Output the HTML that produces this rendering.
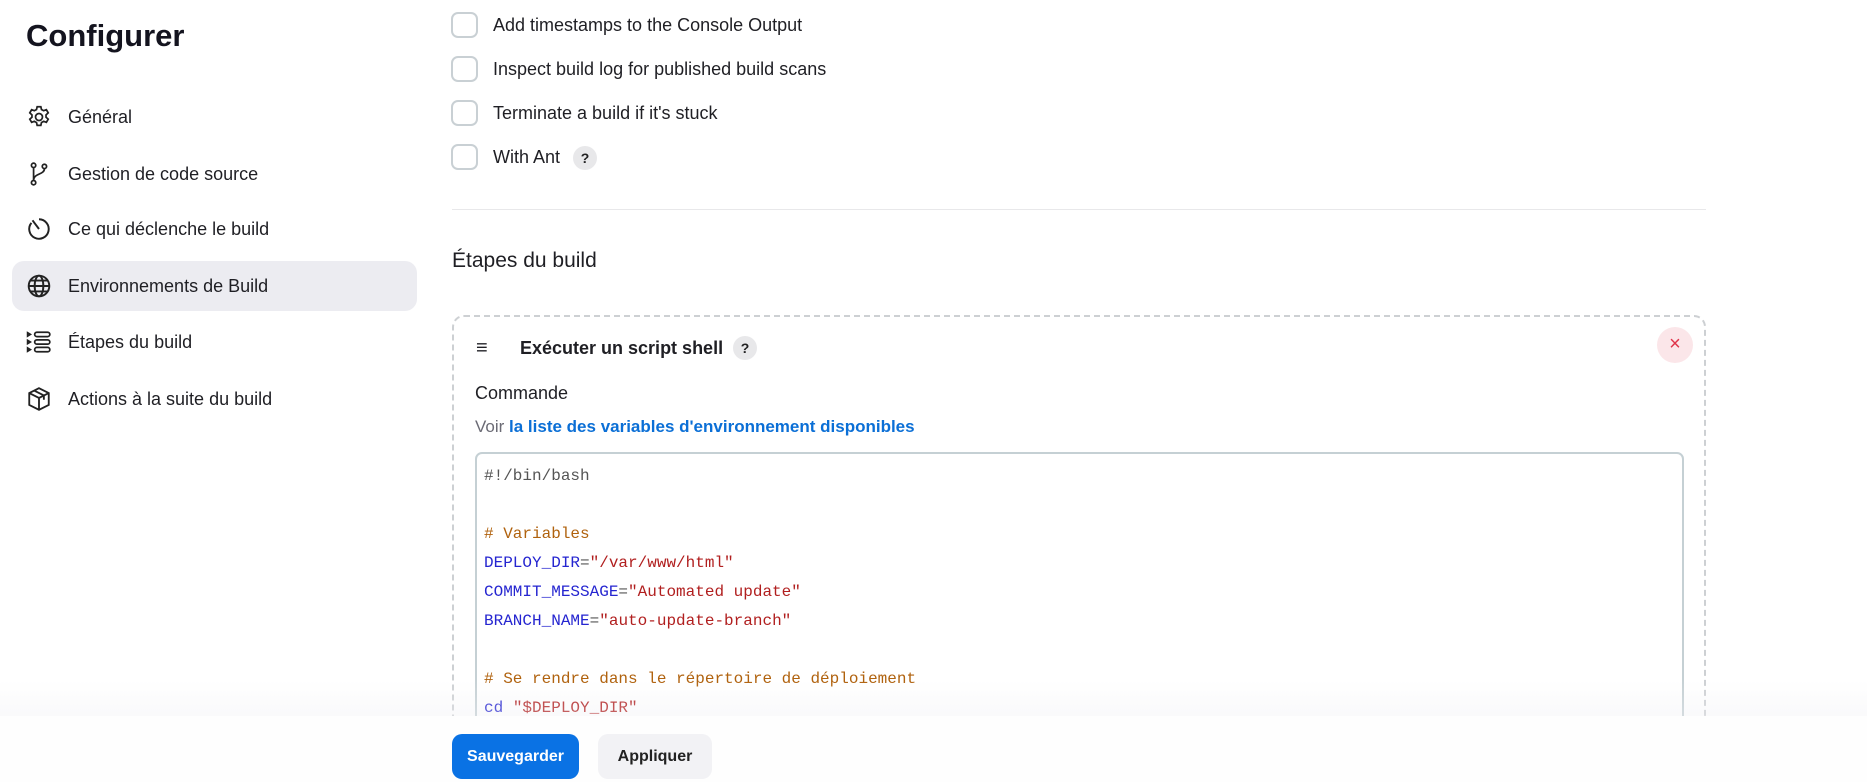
<!DOCTYPE html>
<html style="width:1867px;height:782px;overflow:hidden"><head><meta charset="utf-8"><style>
*{box-sizing:border-box;margin:0;padding:0}
body{width:1867px;height:782px;overflow:hidden;background:#fff;font-family:"Liberation Sans",sans-serif;color:#1f1f24;position:relative}
.abs{position:absolute}
h1{position:absolute;left:26px;top:18px;font-size:31px;font-weight:700;color:#14141f}
.nav{position:absolute;left:26px;height:30px;display:flex;align-items:center;font-size:18px}
.nav svg{width:26px;height:26px;margin-right:16px}
.active{position:absolute;left:12px;top:261px;width:405px;height:50px;background:#ececf1;border-radius:12px}
.cb{position:absolute;left:451px;width:27px;height:26px;border:2px solid #c9d0d4;border-radius:7px;background:#fff}
.cbl{position:absolute;left:493px;font-size:18px;line-height:26px}
.q{display:inline-flex;align-items:center;justify-content:center;width:24px;height:24px;border-radius:50%;background:#e8e8ea;font-size:14px;font-weight:700;color:#222}
.code{position:absolute;left:484px;top:462px;font-family:"Liberation Mono",monospace;font-size:16px;line-height:29px;white-space:pre;color:#555}
.v{color:#2525d0}.s{color:#b11f1f}.c{color:#b0620e}
</style></head><body>
<h1>Configurer</h1>
<div class="active"></div>
<div class="nav" style="top:102px"><svg viewBox="0 0 24 24" fill="none" stroke="#222" stroke-width="1.6"><circle cx="12" cy="12" r="3.2"/><path d="M10.3 2.5h3.4l.6 2.6 2 1.1 2.5-.9 1.7 2.9-2 1.8v2.2l2 1.8-1.7 2.9-2.5-.9-2 1.1-.6 2.6h-3.4l-.6-2.6-2-1.1-2.5.9-1.700-2.9 2-1.8v-2.2l-2-1.8 1.7-2.9 2.5.9 2-1.1z"/></svg>Général</div>
<div class="nav" style="top:159px"><svg viewBox="0 0 24 24" fill="none" stroke="#222" stroke-width="1.6"><circle cx="7" cy="4" r="2"/><circle cx="7" cy="20" r="2"/><circle cx="17" cy="5" r="2"/><path d="M7 6v12M17 7c0 6-10 4-10 11"/></svg>Gestion de code source</div>
<div class="nav" style="top:214px"><svg viewBox="0 0 24 24" fill="none" stroke="#222" stroke-width="1.8"><path d="M12 3a9 9 0 1 1-7 3.3"/><path d="M6 4l6 8"/></svg>Ce qui déclenche le build</div>
<div class="nav" style="top:271px"><svg viewBox="0 0 24 24" fill="none" stroke="#222" stroke-width="1.8"><circle cx="12" cy="12" r="9.5"/><ellipse cx="12" cy="12" rx="4" ry="9.5"/><path d="M2.5 12h19M4 7h16M4 17h16"/></svg>Environnements de Build</div>
<div class="nav" style="top:327px"><svg viewBox="0 0 24 24" fill="none" stroke="#222" stroke-width="1.6"><path d="M1.5 3.5l2.5 1.5-2.5 1.5zM1.5 10.5l2.5 1.5-2.5 1.5zM1.5 17.5l2.5 1.5-2.5 1.5z"/><rect x="8" y="3" width="14" height="4" rx="2"/><rect x="8" y="10" width="14" height="4" rx="2"/><rect x="8" y="17" width="14" height="4" rx="2"/></svg>Étapes du build</div>
<div class="nav" style="top:384px"><svg viewBox="0 0 24 24" fill="none" stroke="#222" stroke-width="1.7"><path d="M12 2l9 4.5v11L12 22l-9-4.5v-11z"/><path d="M3 6.5l9 4.5 9-4.5M12 11v11M7.5 4.2l9 4.5v4"/></svg>Actions à la suite du build</div>

<div class="cb" style="top:12px"></div><div class="cbl" style="top:12px">Add timestamps to the Console Output</div>
<div class="cb" style="top:56px"></div><div class="cbl" style="top:56px">Inspect build log for published build scans</div>
<div class="cb" style="top:100px"></div><div class="cbl" style="top:100px">Terminate a build if it's stuck</div>
<div class="cb" style="top:144px"></div><div class="cbl" style="top:144px">With Ant <span class="q" style="margin-left:8px;vertical-align:middle">?</span></div>
<div class="abs" style="left:452px;top:209px;width:1254px;height:1px;background:#e8e8ea"></div>
<div class="abs" style="left:452px;top:249px;font-size:21px">Étapes du build</div>
<div class="abs" style="left:452px;top:315px;width:1254px;height:490px;border:2px dashed #cdd0d3;border-radius:12px"></div>
<div class="abs" style="left:476px;top:337px;font-size:20px">≡</div>
<div class="abs" style="left:520px;top:336px;font-size:18px;font-weight:700;display:flex;align-items:center">Exécuter un script shell <span class="q" style="margin-left:10px">?</span></div>
<div class="abs" style="left:1657px;top:327px;width:36px;height:36px;border-radius:50%;background:#fbe6e9;color:#e0344a;font-size:20px;text-align:center;line-height:35px">×</div>
<div class="abs" style="left:475px;top:383px;font-size:18px">Commande</div>
<div class="abs" style="left:475px;top:417px;font-size:17px;color:#6b6b75">Voir <span style="color:#0b6fd6;font-weight:600">la liste des variables d'environnement disponibles</span></div>
<div class="abs" style="left:475px;top:452px;width:1209px;height:350px;border:2px solid #c5d0d4;border-radius:7px"></div>
<div class="code">#!/bin/bash

<span class="c"># Variables</span>
<span class="v">DEPLOY_DIR</span>=<span class="s">"/var/www/html"</span>
<span class="v">COMMIT_MESSAGE</span>=<span class="s">"Automated update"</span>
<span class="v">BRANCH_NAME</span>=<span class="s">"auto-update-branch"</span>

<span class="c"># Se rendre dans le répertoire de déploiement</span>
<span class="v">cd</span> <span class="s">"$DEPLOY_DIR"</span></div>
<div class="abs" style="left:0;top:680px;width:1867px;height:36px;background:linear-gradient(rgba(255,255,255,0),rgba(240,240,243,0.35))"></div>
<div class="abs" style="left:0;top:716px;width:1867px;height:66px;background:#fefefe"></div>
<div class="abs" style="left:452px;top:734px;width:127px;height:45px;border-radius:10px;background:#0a72e4;color:#fff;font-weight:700;font-size:16px;text-align:center;line-height:45px">Sauvegarder</div>
<div class="abs" style="left:598px;top:734px;width:114px;height:45px;border-radius:10px;background:#f2f2f5;color:#222;font-weight:700;font-size:16px;text-align:center;line-height:45px">Appliquer</div>
</body></html>
